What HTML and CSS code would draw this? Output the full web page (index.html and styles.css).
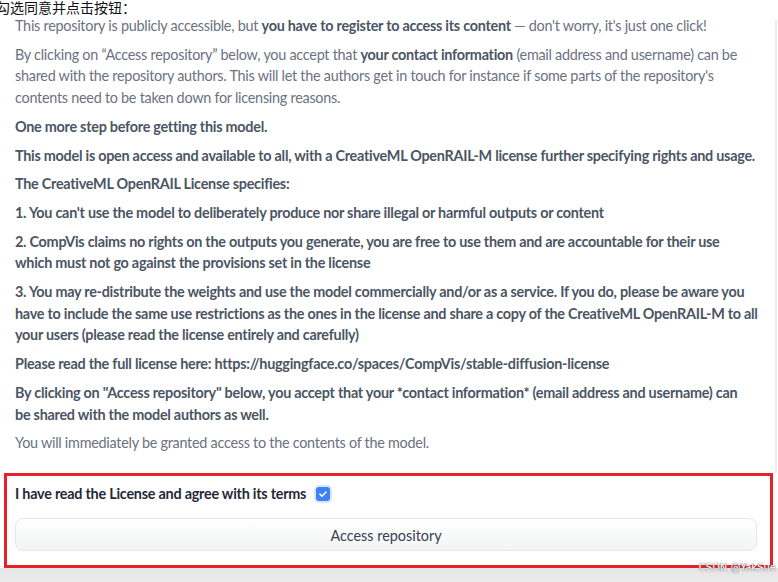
FILE: index.html
```html
<!DOCTYPE html>
<html lang="en">
<head>
    <meta charset="UTF-8">
    <meta name="viewport" content="width=device-width, initial-scale=1.0">
    <title>Access repository</title>
    <link rel="stylesheet" href="styles.css">
</head>
<body>
    <div class="note">勾选同意并点击按钮：</div>
    <div class="card">
        <p>This repository is publicly accessible, but <b>you have to register to access its content</b> — don't worry, it's just one click!</p>
        <p>By clicking on “Access repository” below, you accept that <b>your contact information</b> (email address and username) can be<br>shared with the repository authors. This will let the authors get in touch for instance if some parts of the repository's<br>contents need to be taken down for licensing reasons.</p>
        <div class="terms">
            <p>One more step before getting this model.</p>
            <p>This model is open access and available to all, with a CreativeML OpenRAIL-M license further specifying rights and usage.</p>
            <p>The CreativeML OpenRAIL License specifies:</p>
            <p>1. You can't use the model to deliberately produce nor share illegal or harmful outputs or content</p>
            <p>2. CompVis claims no rights on the outputs you generate, you are free to use them and are accountable for their use<br>which must not go against the provisions set in the license</p>
            <p>3. You may re-distribute the weights and use the model commercially and/or as a service. If you do, please be aware you<br>have to include the same use restrictions as the ones in the license and share a copy of the CreativeML OpenRAIL-M to all<br>your users (please read the license entirely and carefully)</p>
            <p>Please read the full license here: https://huggingface.co/spaces/CompVis/stable-diffusion-license</p>
            <p>By clicking on "Access repository" below, you accept that your *contact information* (email address and username) can<br>be shared with the model authors as well.</p>
        </div>
        <p>You will immediately be granted access to the contents of the model.</p>
    </div>
    <form class="gate">
        <label class="agree">I have read the License and agree with its terms
            <input type="checkbox" checked>
        </label>
        <button type="submit">Access repository</button>
    </form>
    <div class="shade"></div>
    <div class="mark">CSDN @YakSue</div>
</body>
</html>
```

FILE: styles.css
```css
:root {
    --text: #6b7280;
    --strong: #4b5563;
    --label: #1f2937;
    --line: #e5e7eb;
    --red: #e8202a;
    --blue: #3b82f6;
}

body {
    font-family: Lato, 'Open Sans', sans-serif;
    font-size: 14.4px;
    line-height: 21.6px;
    letter-spacing: -0.26px;
    margin: 0;
    background-color: #ffffff;
    color: var(--text);
    position: relative;
    overflow: hidden;
}

.note {
    font-family: 'Noto Sans CJK SC', sans-serif;
    font-size: 14px;
    line-height: 15px;
    letter-spacing: 0;
    color: #111;
    margin-left: -4px;
    height: 15px;
}

.card {
    position: relative;
    padding: 0 6px 0 15px;
    height: 458px;
}

.card::after {
    content: '';
    position: absolute;
    top: 5px;
    right: 1px;
    bottom: 0;
    width: 2px;
    background: #ebebef;
}

.card p {
    margin: 0 0 7.2px;
    white-space: nowrap;
}

b, .terms {
    font-weight: 700;
    letter-spacing: -0.26px;
    color: var(--strong);
}

.gate {
    margin: 0 5px 0 4px;
    border: 3px solid var(--red);
    padding: 7px 13px 14px 8px;
}

.agree {
    display: flex;
    align-items: center;
    gap: 10px;
    height: 22px;
    font-weight: 700;
    letter-spacing: -0.24px;
    color: var(--label);
}

.agree input {
    appearance: none;
    margin: 0;
    width: 14px;
    height: 14px;
    border-radius: 3px;
    background: var(--blue) url("data:image/svg+xml,%3Csvg xmlns='http://www.w3.org/2000/svg' viewBox='0 0 16 16'%3E%3Cpath d='M4.5 8.2l2.3 2.3 4.7-4.8' fill='none' stroke='white' stroke-width='1.8' stroke-linecap='round' stroke-linejoin='round'/%3E%3C/svg%3E") center / 100% no-repeat;
    box-shadow: 0 0 0 2px #dbe6fb;
}

.gate button {
    display: block;
    width: 100%;
    height: 33px;
    margin-top: 13px;
    padding-top: 3px;
    border: 1px solid var(--line);
    border-radius: 8px;
    background: linear-gradient(#ffffff, #f3f4f6);
    font: inherit;
    color: #374151;
}

.shade {
    height: 20px;
    background: linear-gradient(#e4e4e4, #f0f0f0);
}

.mark {
    position: absolute;
    right: 2px;
    top: 562px;
    font-family: 'DejaVu Sans', sans-serif;
    font-size: 10px;
    line-height: 12px;
    letter-spacing: 0;
    color: #fff;
    text-shadow: 0 0 1px #666, 0 0 1px #666;
}
```
